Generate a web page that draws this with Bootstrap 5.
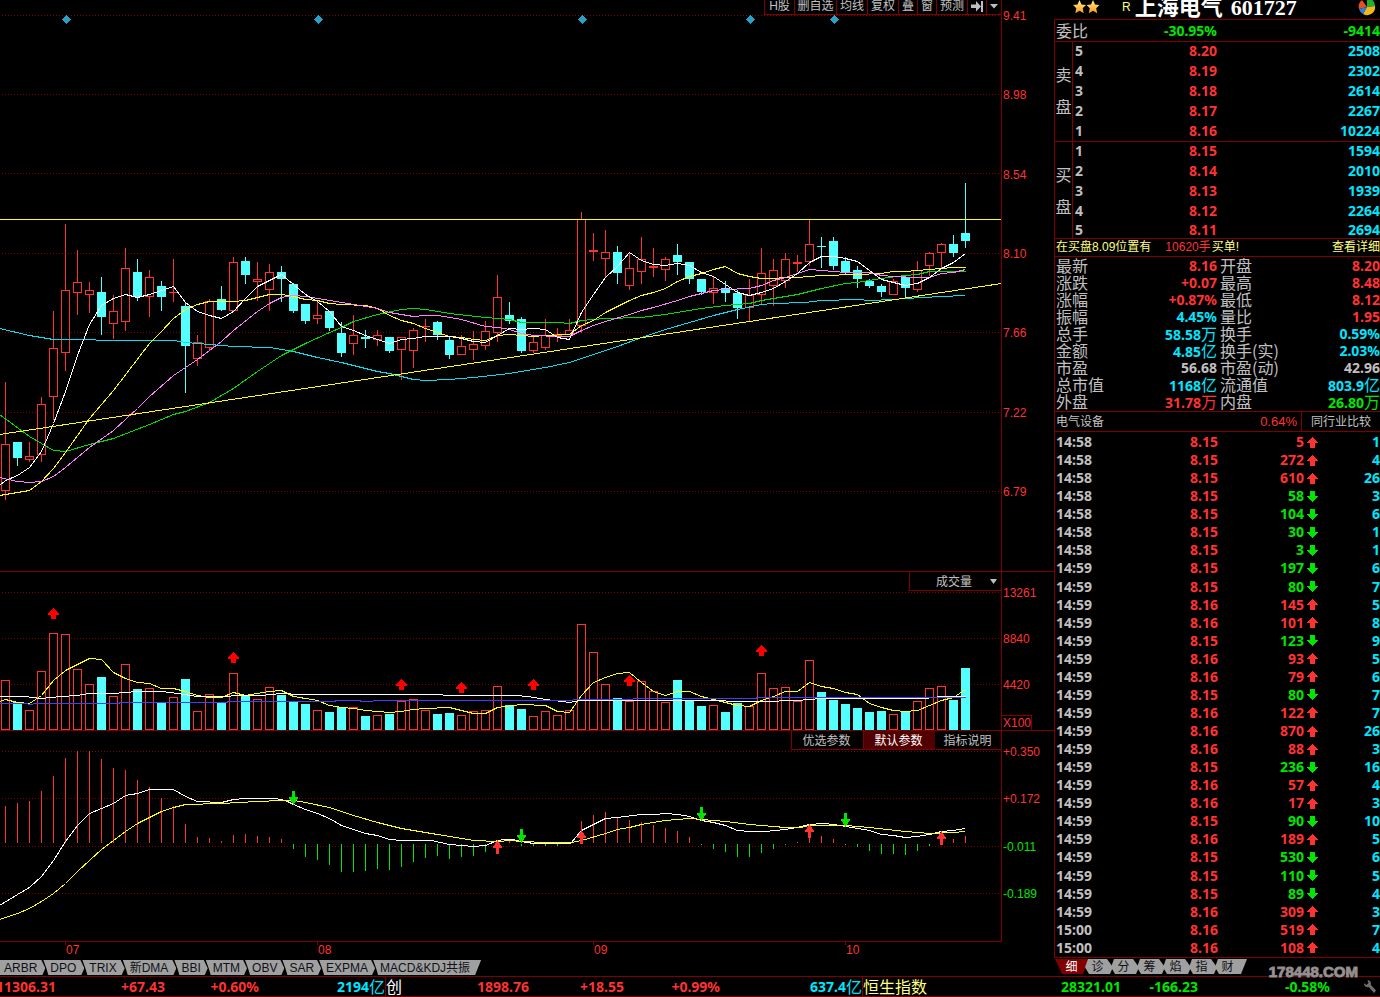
<!DOCTYPE html>
<html lang="zh-CN">
<head>
<meta charset="utf-8">
<meta name="viewport" content="width=device-width, initial-scale=1">
<title>上海电气 601727</title>
<link href="https://cdn.jsdelivr.net/npm/bootstrap@5.3.0/dist/css/bootstrap.min.css" rel="stylesheet">
<style>
:root { --line:#800000; --up:#ff3232; --dn:#00e600; --cy:#00e6ff; --gr:#c0c0c0; --ye:#ffff80; }
body { background:#000; color:var(--gr); font:normal 12px/18px "Liberation Sans","Noto Sans CJK SC",sans-serif; overflow-x:hidden; }
button, select { font:inherit; color:inherit; background:none; border:0; padding:0; border-radius:0; }
a { color:inherit; text-decoration:none; }
.num { font:bold 14px/17px "Noto Sans","Noto Sans CJK SC",sans-serif; }
.num i, .han { font:normal 16px/17px "Noto Sans CJK SC",sans-serif; }
.han { color:var(--gr); }
.up { color:var(--up); } .dn { color:var(--dn); } .cy { color:var(--cy); } .ye { color:var(--ye); }
.ln-b { border-bottom:1px solid var(--line); }
.ln-l { border-left:1px solid var(--line); }
.ln-t { border-top:1px solid var(--line); }
/* chart column */
.charts { min-width:0; }
.plot { min-width:0; flex:1 1 0; position:relative; }
.plot svg { display:block; width:100%; height:100%; position:absolute; inset:0; }
.scale { width:53px; color:var(--up); border-left:1px solid var(--line); padding-left:1px; }
.price-pane { min-height:572px; }
.price-pane .scale { padding-top:7px; padding-bottom:70px; }
.vol-pane { height:159px; }
.vol-pane .scale { padding-top:12px; row-gap:28px; position:relative; }
.vol-pane .scale .unit { position:absolute; left:-1px; bottom:0; height:15px; line-height:14px; width:31px; padding-left:2px; border:1px solid var(--line); border-width:1px 1px 0 0; }
.macd-pane { height:211px; }
.macd-pane .scale { padding-top:12px; padding-bottom:39px; }
.over { position:absolute; right:0; top:0; z-index:2; background:#000; }
.tools { height:15px; }
.tools button { line-height:12px; height:14px; border-left:1px solid var(--line); padding:0 0 2px; text-align:center; }
.tools button svg { position:static; height:11px; }
.t1 { width:19px; } .t2 { width:31px; } .t3 { width:42px; } .t4 { width:15px; } .t0 { width:30px; }
.pick { width:92px; height:19px; appearance:none; border-left:1px solid var(--line); border-bottom:1px solid var(--line); padding:1px 0 0 26px; line-height:18px;
  background:#000 url("data:image/svg+xml,%3Csvg xmlns='http://www.w3.org/2000/svg' width='7' height='5'%3E%3Cpath d='M0 0h7L3.5 5z' fill='%23c0c0c0'/%3E%3C/svg%3E") no-repeat right 4px center; }
.params button { width:72px; height:19px; border-left:1px solid var(--line); border-bottom:1px solid var(--line); line-height:17px; padding:2px 2px 0 0; }
.params button:last-child { width:66px; border-left-color:#000; }
.params .on { background:#500000; color:#fff; }
.months { display:grid; grid-template-columns:65fr 252fr 276fr 252fr 209fr; height:18px; color:var(--up); }
.months span { position:relative; padding-left:1px; line-height:17px; }
.months span + span::before { content:""; position:absolute; left:0; top:0; width:1px; height:3px; background:var(--line); }
.strip { height:16px; }
.strip button { height:15px; line-height:16px; background:#a0a0a0; color:#101018; padding:0 7px; margin-right:-2px; white-space:nowrap;
  clip-path:polygon(0 0, calc(100% - 4px) 0, 100% 55%, calc(100% - 3px) 100%, 5px 100%, 3px 55%); }
.strip button:first-child { padding-left:4px; padding-right:8px; clip-path:polygon(0 0, calc(100% - 4px) 0, 100% 55%, calc(100% - 3px) 100%, 0 100%); }
.strip button:nth-child(-n+4) { padding-right:8px; }
.strip button:last-child { padding-right:11px; clip-path:polygon(0 0, 100% 0, calc(100% - 6px) 100%, 5px 100%, 3px 55%); }
/* quote column */
.side { width:326px; flex:none; }
.head { height:19px; line-height:14px; overflow:hidden; padding-left:19px; }
.head h1 { font:bold 22px/15px "Liberation Serif","Noto Sans CJK SC",serif; color:#fff; }
.flag { margin-left:22px; }
.code { margin-left:8px; }
.ratio { height:22px; line-height:21px; }
.half { width:163px; padding:0 1px; }
.rest { flex:1 1 0; padding-left:2px; }
table { border-collapse:separate; border-spacing:0; width:100%; table-layout:fixed; }
td, th { padding:0; }
.ladder td { height:20px; line-height:18px; vertical-align:top; }
.ladder th { width:18px; border-right:1px solid var(--line); vertical-align:top; padding-top:16px; text-align:center; }
.ladder th.han { line-height:32px; }
.ladder .lv { width:30px; padding-left:2px; }
.ladder .pr { width:114px; }
.bids { border-top:1px solid var(--line); }
.asks tr:last-child td { height:19px; }
.bids tr:last-child td { height:16px; line-height:16px; }
.tip { height:18px; line-height:17px; padding-left:1px; }
.tip button { line-height:17px; }
.lots { margin-left:14px; margin-right:1px; }
.facts { padding-bottom:1px; }
.facts > div { height:17px; }
.sector { height:20px; line-height:20px; padding-left:1px; }
.sector .up { font-size:13px; }
.sector a { width:79px; text-align:center; line-height:21px; height:19px; }
.tape-box { padding-top:1px; }
.tape td { height:18px; line-height:18px; }
.tape td:first-child { width:60px; padding-left:1px; color:var(--gr); }
.tape td:nth-child(2) { width:103px; }
.tape td:nth-child(3) { width:86px; }
.tape td:nth-child(4) { width:17px; text-align:right; }
.tape svg { display:block; margin-left:3px; }
.cards { height:18px; padding-top:1px; }
.cards button { width:28px; height:15px; line-height:17px; margin-right:-2px; padding-right:3px; background:#a0a0a0; color:#101018;
  clip-path:polygon(3px 0, calc(100% - 6px) 0, 100% 55%, calc(100% - 3px) 100%, 4px 100%, 0 55%); }
.cards button:first-child { width:34px; margin-left:1px; margin-right:-4px; padding-right:1px; background:#800000; color:#fff; clip-path:polygon(0 0, 100% 0, calc(100% - 6px) 100%, 7px 100%); }
.cards button:last-child { width:32px; padding-right:7px; clip-path:polygon(3px 0, 100% 0, calc(100% - 6px) 100%, 4px 100%, 0 55%); }
/* index bar */
.indices { display:grid; height:21px; border-bottom:1px solid var(--line);
  grid-template-columns:minmax(0,56fr) 109fr 94fr 126fr 144fr 95fr 96fr 142fr 259fr 77fr 132fr 50fr; }
.indices > * { display:flex; justify-content:flex-end; white-space:nowrap; line-height:19px; }
.indices i, .indices .han { line-height:19px; }
.stamp { position:absolute; right:22px; bottom:13px; font:bold 15px/24px "Liberation Sans",sans-serif; color:#b0a8a8; -webkit-text-stroke:1px #a09898; opacity:.9; z-index:3; }
</style>
</head>
<body>
<div class="d-flex flex-column min-vh-100 position-relative">
  <div class="d-flex flex-fill">
    <main class="charts d-flex flex-column flex-fill">
      <section class="price-pane d-flex flex-fill ln-b">
        <div class="plot"><svg id="price" viewBox="0 0 1001 571" preserveAspectRatio="none" shape-rendering="crispEdges"></svg>
          <div class="over tools d-flex ln-b">
            <button class="t0">H股</button><button class="t3">删自选</button><button class="t2">均线</button><button class="t2">复权</button><button class="t1">叠</button><button class="t1">窗</button><button class="t2">预测</button><button class="t1" aria-label="下一个"><svg viewBox="0 0 18 11"><path d="M3 3.500h5V0l5 5.500-5 5V7H3zM13 0h2v11h-2z" fill="#c0c0c0"/></svg></button><button class="t4" aria-label="更多"><svg viewBox="0 0 14 11"><path d="M3 3h8L7 7.500z" fill="#c0c0c0"/></svg></button>
          </div>
        </div>
        <div class="scale d-flex flex-column justify-content-between"><span>9.41</span><span>8.98</span><span>8.54</span><span>8.10</span><span>7.66</span><span>7.22</span><span>6.79</span></div>
      </section>
      <section class="vol-pane d-flex ln-b">
        <div class="plot"><svg id="vol" viewBox="0 572 1001 158" preserveAspectRatio="none" shape-rendering="crispEdges"></svg>
          <select class="over pick" aria-label="副图指标"><option>成交量</option></select>
        </div>
        <div class="scale d-flex flex-column"><span>13261</span><span>8840</span><span>4420</span><span class="unit">X100</span></div>
      </section>
      <section class="macd-pane d-flex">
        <div class="plot ln-b"><svg id="macd" viewBox="0 731 1001 210" preserveAspectRatio="none" shape-rendering="crispEdges"></svg>
          <div class="over params d-flex"><button>优选参数</button><button class="on">默认参数</button><button>指标说明</button></div>
        </div>
        <div class="scale d-flex flex-column justify-content-between"><span>+0.350</span><span>+0.172</span><span class="dn">-0.011</span><span class="dn">-0.189</span></div>
      </section>
      <div class="months"><span></span><span>07</span><span>08</span><span>09</span><span>10</span></div>
      <nav class="strip d-flex"><button>ARBR</button><button>DPO</button><button>TRIX</button><button>新DMA</button><button>BBI</button><button>MTM</button><button>OBV</button><button>SAR</button><button>EXPMA</button><button>MACD&amp;KDJ共振</button></nav>
    </main>

    <aside class="side d-flex flex-column">
      <header class="head d-flex">
        <svg width="27" height="14" viewBox="0 0 27 14"><defs><linearGradient id="g" x2="0" y2="1"><stop stop-color="#fff0a0"/><stop offset="1" stop-color="#ff9a10"/></linearGradient></defs><path id="s" d="M6.500 0l2 4.500 4.500.5-3.300 3.200 1 5-4.200-2.400-4.200 2.400 1-5L0 5l4.500-.5z" fill="url(#g)"/><use href="#s" x="13.500"/></svg>
        <span class="ye flag">R</span>
        <h1 class="m-0 ms-1 text-nowrap">上海电气<span class="code">601727</span></h1>
        <svg class="ms-auto me-1" width="18" height="16" viewBox="0 0 18 16"><path d="M9 7L4 0a8.500 8.500 0 00-3 9z" fill="#e85020"/><path d="M9 7V-2a8 8 0 018 8z" fill="#20b030"/><path d="M9 7l8-1a8 8 0 01-12 8z" fill="#f0b820"/><path d="M9 7L5 14a8 8 0 01-4-5z" fill="#2a80e0"/></svg>
      </header>
      <div class="flex-fill d-flex flex-column ln-l ln-t ln-b">
        <div class="ratio d-flex ln-b num"><div class="half d-flex justify-content-between align-items-center"><span class="han">委比</span><span class="dn">-30.95%</span></div><div class="rest text-end dn">-9414</div></div>
        <table class="ladder asks num"><tbody id="asks"></tbody></table>
        <table class="ladder bids num ln-b"><tbody id="bids"></tbody></table>
        <div class="tip d-flex ln-b ye"><span>在买盘8.09位置有</span><span class="up lots">10620手</span><span>买单!</span><button class="ms-auto">查看详细</button></div>
        <div class="facts ln-b num" id="facts"></div>
        <div class="sector d-flex ln-b"><span>电气设备</span><span class="up ms-auto me-1">0.64%</span><a href="#" class="ln-l">同行业比较</a></div>
        <div class="tape-box d-grid flex-fill"><table class="tape num"><tbody id="tape"></tbody></table></div>
      </div>
      <nav class="cards d-flex"><button>细</button><button>诊</button><button>分</button><button>筹</button><button>焰</button><button>指</button><button>财</button></nav>
    </aside>
  </div>

  <footer class="indices ln-t num up">
    <span>11306.31</span><span>+67.43</span><span>+0.60%</span><span class="cy">2194<i>亿</i></span>
    <span class="ln-l justify-content-between"><b class="han text-white">创</b>1898.76</span><span>+18.55</span><span>+0.99%</span><span class="cy">637.4<i>亿</i></span>
    <span class="ln-l justify-content-between dn"><b class="han ye">恒生指数</b>28321.01</span><span class="dn">-166.23</span><span class="dn">-0.58%</span>
    <button class="align-items-center pe-1" aria-label="设置"><svg width="12" height="13" viewBox="0 0 12 13"><path d="M3.500 0a3.500 3.500 0 013.200 4.700L12 10.500 10 13 4.800 7A3.500 3.500 0 010 3.200L2.300 5 4.500 3z" fill="#707070"/></svg></button>
  </footer>
  <div class="stamp">178448.COM</div>
</div>

<script src="https://cdn.jsdelivr.net/npm/bootstrap@5.3.0/dist/js/bootstrap.bundle.min.js"></script>
<script>
const RED = '#ff3232', CYAN = '#54ffff', GREEN = '#00e600', LINE = '#800000';
const $ = id => document.getElementById(id);
const cx = i => 5 + 12 * i;
const grid = ys => ys.map(y => `<path d="M2 ${y}.5H1001" stroke="${LINE}" stroke-dasharray="1 2"/>`).join('');
const curve = (pts, c) => `<polyline points="${pts}" fill="none" stroke="${c}" transform="translate(.5 .5)"/>`;
const hollow = (i, a, b) => `<rect x="${cx(i) - 3.5}" y="${a + .5}" width="8" height="${Math.max(b - a, 1)}" fill="#000" stroke="${RED}"/>`;
const solid = (i, a, b) => `<rect x="${cx(i) - 4}" y="${a}" width="9" height="${b - a}" fill="${CYAN}"/>`;

// candles: direction, high, body top, body bottom, low
const bars = `r382,444,490,500 c442,442,458,466 r442,456,459,462 r397,404,454,462 r311,348,396,420 r224,290,352,371 r250,282,292,315 r282,290,294,313 c277,292,317,335 r295,311,323,339
r248,268,321,331 c259,272,297,301 r270,277,296,317 c281,286,297,311 r259,292,292,302 c302,306,346,393 r335,342,358,366 r299,301,347,350 c286,299,310,311 r257,262,310,311
c257,261,275,284 r262,279,281,301 r264,272,289,311 c266,272,279,302 c283,284,311,313 c304,304,321,324 r302,315,318,324 c311,311,328,331 c322,333,353,357 r315,335,343,355
c330,337,339,348 r330,335,339,346 c337,337,351,353 r337,337,349,380 r328,330,350,368 r319,326,326,342 c321,322,335,340 c337,340,355,359 r335,346,354,355 r331,344,349,360
r321,331,345,350 r275,297,332,342 c302,315,321,324 c317,319,351,353 r335,342,350,353 r319,335,347,350 r328,334,335,342 r319,330,334,334 r212,219,325,333 r233,250,251,261
r230,252,258,277 c246,252,273,284 r252,268,285,290 r237,259,271,284 r248,266,267,277 r257,259,269,281 c244,255,262,275 c262,262,279,284 c279,279,292,295 r277,288,292,304
c281,288,293,302 c290,293,308,319 r279,295,307,321 r248,273,294,305 r259,270,285,306 r253,259,280,288 r255,262,263,272 r220,244,261,266 c237,246,247,268 c237,241,266,270
c257,261,272,274 c266,270,279,288 c279,281,286,288 c284,286,292,297 r279,281,294,294 c276,277,288,298 r261,270,289,292 r252,253,265,276 r243,244,252,268 c235,244,253,257
c183,233,241,248`.split(/\s+/).map(s => [s[0], ...s.slice(1).split(',').map(Number)]);

const candles = bars.map(([d, h, a, b, l], i) => {
  const x = cx(i) + .5;
  if (d === 'c') return `<path d="M${x} ${h}V${l}" stroke="${CYAN}"/>` + solid(i, a, b);
  if (a === b) return `<path d="M${x} ${h}V${l}M${x - 4.5} ${a + .5}h9" stroke="${RED}"/>`;
  return `<path d="M${x} ${h}V${a}M${x} ${b}V${l}" stroke="${RED}"/>` + hollow(i, a, b);
}).join('');

const ma = {
  '#00e0f0': '-1,328 29,335 53,339 89,339 101,340 173,340 185,342 209,344 233,346 269,347 293,351 317,357 341,362 353,365 377,371 389,373 413,379 425,380 449,379 473,377 509,373 545,367 569,362 593,354 617,346 641,337 665,329 689,322 713,315 737,309 761,304 773,303 805,302 821,300 857,299 869,300 893,299 905,298 941,296 965,295',
  '#00e000': '-1,414 29,436 53,450 65,451 89,444 113,438 149,424 173,414 185,411 209,402 233,388 257,371 281,355 305,343 329,332 341,327 353,321 377,314 401,309 413,308 425,309 449,313 485,317 509,319 521,322 557,322 569,323 581,320 605,318 641,317 665,314 689,310 701,308 725,305 749,303 761,300 797,294 821,288 845,283 857,282 881,278 905,275 917,274 929,271 965,271',
  '#ffff00': '-1,495 29,490 41,481 53,468 65,452 89,418 113,390 149,343 161,331 173,318 185,309 197,304 209,301 233,301 245,300 257,297 269,294 281,294 293,296 305,299 317,300 329,303 341,304 365,305 377,308 389,315 401,320 413,323 425,328 437,332 449,336 461,337 473,339 485,340 497,335 509,334 521,335 533,336 545,335 569,334 581,325 593,320 605,312 617,306 629,300 641,295 653,292 665,288 677,281 689,276 701,273 713,269 725,266 737,273 749,276 761,278 797,277 821,275 857,274 881,273 893,271 905,271 929,269 953,267 965,267',
  '#ff80ff': '-1,477 17,481 29,482 41,481 53,476 65,467 89,447 113,430 137,408 149,396 173,375 197,359 221,341 233,330 257,311 269,303 281,297 293,295 305,296 317,298 341,302 353,304 377,308 389,312 401,314 413,316 425,315 437,315 461,319 485,326 497,327 509,329 521,333 533,335 557,336 569,336 581,330 593,325 605,321 629,314 641,310 653,307 677,300 689,296 701,293 713,290 725,289 749,288 761,285 773,280 785,277 797,273 809,269 821,270 845,272 869,272 881,275 893,276 917,277 929,277 941,273 953,272 965,269',
  '#ffffff': '-1,485 5,480 17,475 29,467 41,451 53,423 65,391 77,355 89,324 101,305 113,298 125,294 137,297 149,294 161,290 173,286 185,302 197,311 209,315 221,318 233,311 245,298 257,286 269,280 281,274 293,284 305,294 317,301 329,311 341,326 353,330 365,335 377,339 389,343 401,339 413,338 425,336 449,336 461,338 473,341 485,342 497,335 509,328 521,329 533,328 545,329 557,337 569,339 581,312 593,294 605,277 617,266 629,252 641,260 653,264 665,265 677,263 689,265 701,272 713,276 725,284 737,292 749,295 761,292 773,288 785,281 797,273 809,262 821,256 833,256 845,258 857,261 869,270 881,279 893,282 905,285 917,283 929,277 941,268 953,262 965,253'
};
$('price').innerHTML = grid([15, 94, 173, 253, 332, 412, 491]) + candles
  + Object.entries(ma).map(([c, p]) => curve(p, c)).join('')
  + curve('-1,219 1001,219', '#ffff00') + curve('-1,434 1001,283', '#ffff00')
  + [66, 318, 582, 750, 834].map(x => `<path d="M${x + .5} 15l4.500 4.500-4.500 4.500-4.500-4.500z" fill="#28a0c8"/>`).join('');

const vols = [680,702,710,671,633,634,669,684,677,696,664,689,688,703,697,679,711,694,703,673,695,699,687,695,701,704,710,712,707,707,716,715,714,701,699,710,714,713,715,711,710,686,705,709,716,711,715,710,624,652,684,698,701,681,691,702,680,700,706,705,712,703,706,673,688,687,701,660,692,700,704,708,712,711,714,711,701,688,686,700,668];
const bigUp = ([x, y]) => `<path d="M${x + .5} ${y}l5.500 6v1h-3v4h-5v-4h-3v-1z" fill="#ff0000"/>`;
$('vol').innerHTML = grid([592, 638, 684])
  + vols.map((v, i) => bars[i][0] === 'c' ? solid(i, v, 730) : hollow(i, v, 729)).join('')
  + curve('-1,701 5,699 17,702 29,703 41,695 53,680 65,670 77,664 89,658 101,659 113,672 125,678 137,682 149,683 161,688 173,688 185,691 197,695 209,697 221,697 233,692 245,695 257,693 269,691 281,690 293,696 305,698 317,700 329,705 341,707 353,708 365,710 389,712 401,711 413,709 425,708 449,707 461,710 473,713 485,713 497,707 521,704 545,705 557,711 569,712 581,695 593,682 605,677 617,673 629,672 641,682 653,691 665,695 677,691 689,691 701,696 713,699 725,702 737,705 749,706 761,700 773,696 785,691 797,691 809,682 821,686 833,688 845,692 857,694 869,703 881,707 893,710 905,711 917,710 929,705 941,700 953,697 965,689', '#ffff00')
  + curve('-1,696 24,696 41,698 60,696 77,695 89,693 113,693 137,691 161,691 177,693 197,696 221,696 240,695 260,695 281,693 300,694 440,694 445,695 515,695 527,696 545,699 569,702 581,700 690,700 760,701 797,700 821,698 925,698 940,696 965,696', '#ffffff')
  + curve('-1,703 24,703 30,704 36,703 118,703 120,702 226,702 228,701 334,701 336,700 358,700 362,701 383,700 570,700 575,699 630,699 635,698 755,698 757,697 965,697', '#4040ff')
  + [[53,608],[233,652],[401,679],[461,682],[533,679],[629,675],[761,645]].map(bigUp).join('');

// histogram ends; values above 843 grow upward, below grow downward
const hist = [806,803,801,791,776,758,751,751,759,768,770,780,787,798,806,824,837,838,841,835,834,836,837,839,849,857,860,865,872,872,871,869,870,867,862,858,856,859,857,856,852,843,841,846,846,846,846,844,821,815,812,818,820,822,825,828,831,837,845,849,852,857,857,853,849,845,842,830,836,839,845,847,851,854,854,855,851,846,838,839,836];
const upMark = ([x, y]) => `<path d="M${x + .5} ${y}l4.500 7v1h-3v6h-3v-6h-3v-1z" fill="${RED}"/>`;
const dnMark = ([x, y]) => `<path d="M${x + .5} ${y + 14}l4.500-7v-1h-3v-6h-3v6h-3v1z" fill="${GREEN}"/>`;
$('macd').innerHTML = grid([751, 798, 846, 893])
  + hist.map((v, i) => v < 844 ? `<path d="M${cx(i) + .5} ${v}V843" stroke="${RED}"/>` : `<path d="M${cx(i) + .5} 844V${v}" stroke="${GREEN}"/>`).join('')
  + curve('-1,905 17,894 29,887 41,876 53,860 65,841 77,825 89,813 101,808 113,803 125,795 137,793 149,789 173,789 185,796 197,801 221,802 233,799 245,798 275,798 285,800 293,804 305,809 317,813 329,818 341,825 365,833 377,835 389,839 401,840 431,840 449,844 473,846 485,845 497,840 505,839 512,839 521,841 533,843 570,843 581,830 593,824 605,818 617,817 641,814 655,814 665,813 677,814 689,816 701,820 713,822 725,825 737,830 749,831 765,831 785,829 797,827 809,824 823,823 833,824 845,826 857,828 869,830 881,834 893,835 905,837 917,836 929,834 941,831 953,830 965,828', '#ffffff')
  + curve('-1,919 17,913 29,908 41,901 53,893 65,883 77,871 89,860 101,849 113,840 125,831 137,823 149,817 161,811 173,807 185,804 221,803 257,801 281,800 293,800 305,802 329,807 353,815 377,822 401,828 437,834 473,840 497,841 510,840 521,841 545,842 571,842 581,840 605,833 617,829 629,827 641,824 665,820 689,818 701,819 725,821 749,824 785,827 800,827 809,825 845,825 869,827 905,831 929,833 953,832 965,831', '#ffff00')
  + [[497,840],[581,830],[809,824],[941,831]].map(upMark).join('') + [[293,791],[521,829],[701,807],[845,813]].map(dnMark).join('');

const level = side => ([n, p, v], i) => `<tr>${i ? '' : `<th rowspan="5" class="han">${side}<br>盘</th>`}<td class="lv">${n}</td><td class="pr up text-end">${p}</td><td class="cy text-end">${v}</td></tr>`;
$('asks').innerHTML = [[5,'8.20',2508],[4,'8.19',2302],[3,'8.18',2614],[2,'8.17',2267],[1,'8.16',10224]].map(level('卖')).join('');
$('bids').innerHTML = [[1,'8.15',1594],[2,'8.14',2010],[3,'8.13',1939],[4,'8.12',2264],[5,'8.11',2694]].map(level('买')).join('');

$('facts').innerHTML = [
  ['最新','8.16','up','开盘','8.20','up'], ['涨跌','+0.07','up','最高','8.48','up'], ['涨幅','+0.87%','up','最低','8.12','up'],
  ['振幅','4.45%','cy','量比','1.95','up'], ['总手','58.58万','cy','换手','0.59%','cy'], ['金额','4.85亿','cy','换手(实)','2.03%','cy'],
  ['市盈','56.68','','市盈(动)','42.96',''], ['总市值','1168亿','cy','流通值','803.9亿','cy'], ['外盘','31.78万','up','内盘','26.80万','dn']
].map(r => { const v = s => s.replace(/[万亿]/, '<i>$&</i>');
  return `<div class="d-flex"><div class="half d-flex justify-content-between"><span class="han">${r[0]}</span><span class="${r[2]}">${v(r[1])}</span></div><div class="rest d-flex justify-content-between"><span class="han">${r[3]}</span><span class="${r[5]}">${v(r[4])}</span></div></div>`; }).join('');

// trades: price, lots (negative when sold), count
const trades = [[15,5,1],[15,272,4],[15,610,26],[15,-58,3],[15,-104,6],[15,-30,1],[15,-3,1],[15,-197,6],[15,-80,7],[16,145,5],[16,101,8],[15,-123,9],[16,93,5],[16,79,6],[15,-80,7],[16,122,7],[16,870,26],[16,88,3],[15,-236,16],[16,57,4],[16,17,3],[15,-90,10],[16,189,5],[15,-530,6],[15,-110,5],[15,-89,4],[16,309,3],[16,519,7],[16,108,4]];
$('tape').innerHTML = trades.map(([p, n, c], i) => {
  const t = i < 7 ? '14:58' : i < 27 ? '14:59' : '15:00', up = n > 0;
  const d = up ? 'M5.500 0L11 5v1H8v5H3V6H0V5z' : 'M5.500 11L11 6V5H8V0H3v5H0v1z';
  return `<tr><td>${t}</td><td class="up text-end">8.${p}</td><td class="${up ? 'up' : 'dn'} text-end">${Math.abs(n)}</td><td><svg width="11" height="11" shape-rendering="crispEdges"><path d="${d}" fill="${up ? RED : GREEN}"/></svg></td><td class="cy text-end">${c}</td></tr>`;
}).join('');
</script>
</body>
</html>
